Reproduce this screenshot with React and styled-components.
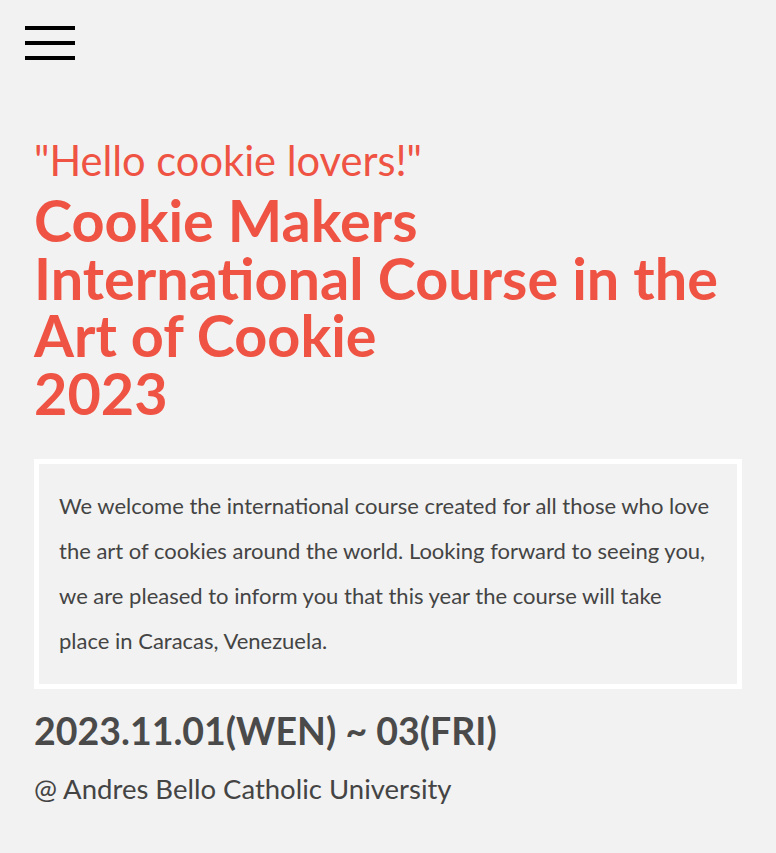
import styled, { createGlobalStyle } from 'styled-components';

const GlobalStyle = createGlobalStyle`
  html, body {
    margin: 0;
    padding: 0;
    background-color: #f2f2f2;
    font-family: Lato, "Open Sans", sans-serif;
  }
`;

export default function App() {
  return (
    <Page>
      <GlobalStyle />
      <Header>
        <MenuButton aria-label="menu">
          <Bar />
          <Bar />
          <Bar />
        </MenuButton>
      </Header>
      <Main>
        <Greeting>"Hello cookie lovers!"</Greeting>
        <Title>
          Cookie Makers
          <br />
          International Course in the Art of Cookie
          <br />
          2023
        </Title>
        <Intro>
          We welcome the international course created for all those who love the art of cookies
          around the world. Looking forward to seeing you, we are pleased to inform you that this
          year the course will take place in Caracas, Venezuela.
        </Intro>
        <EventDate>2023.11.01(WEN) ~ 03(FRI)</EventDate>
        <Venue>@ Andres Bello Catholic University</Venue>
      </Main>
    </Page>
  );
}

const Page = styled.div`
  min-height: 853px;
  background-color: #f2f2f2;
`;

const Header = styled.header`
  padding: 26px 25px 0;
  height: 70px;
  box-sizing: border-box;
`;

const MenuButton = styled.button`
  display: flex;
  flex-direction: column;
  gap: 11px;
  width: 50px;
  padding: 0;
  border: none;
  background: transparent;
  cursor: pointer;
`;

const Bar = styled.span`
  display: block;
  height: 4px;
  width: 100%;
  background-color: #000;
`;

const Main = styled.main`
  padding: 66px 34px 40px;
  color: #444;
`;

const Greeting = styled.p`
  margin: 0;
  font-size: 41.6px;
  line-height: 48px;
  font-weight: 400;
  color: #ef5343;
`;

const Title = styled.h1`
  margin: 7px 0 0;
  font-size: 57.6px;
  line-height: 57.6px;
  font-weight: 700;
  color: #ef5343;
  max-width: 710px;
`;

const Intro = styled.p`
  margin: 38px 0 0;
  padding: 20px 24px 20px 20px;
  border: 5px solid #fff;
  font-size: 22px;
  line-height: 44.8px;
  color: #444;
`;

const EventDate = styled.h2`
  margin: 19px 0 0;
  font-size: 37.5px;
  line-height: 45px;
  font-weight: 700;
  color: #4a4a4a;
`;

const Venue = styled.p`
  margin: 19px 0 0;
  font-size: 27.5px;
  line-height: 33px;
  color: #444;
`;
